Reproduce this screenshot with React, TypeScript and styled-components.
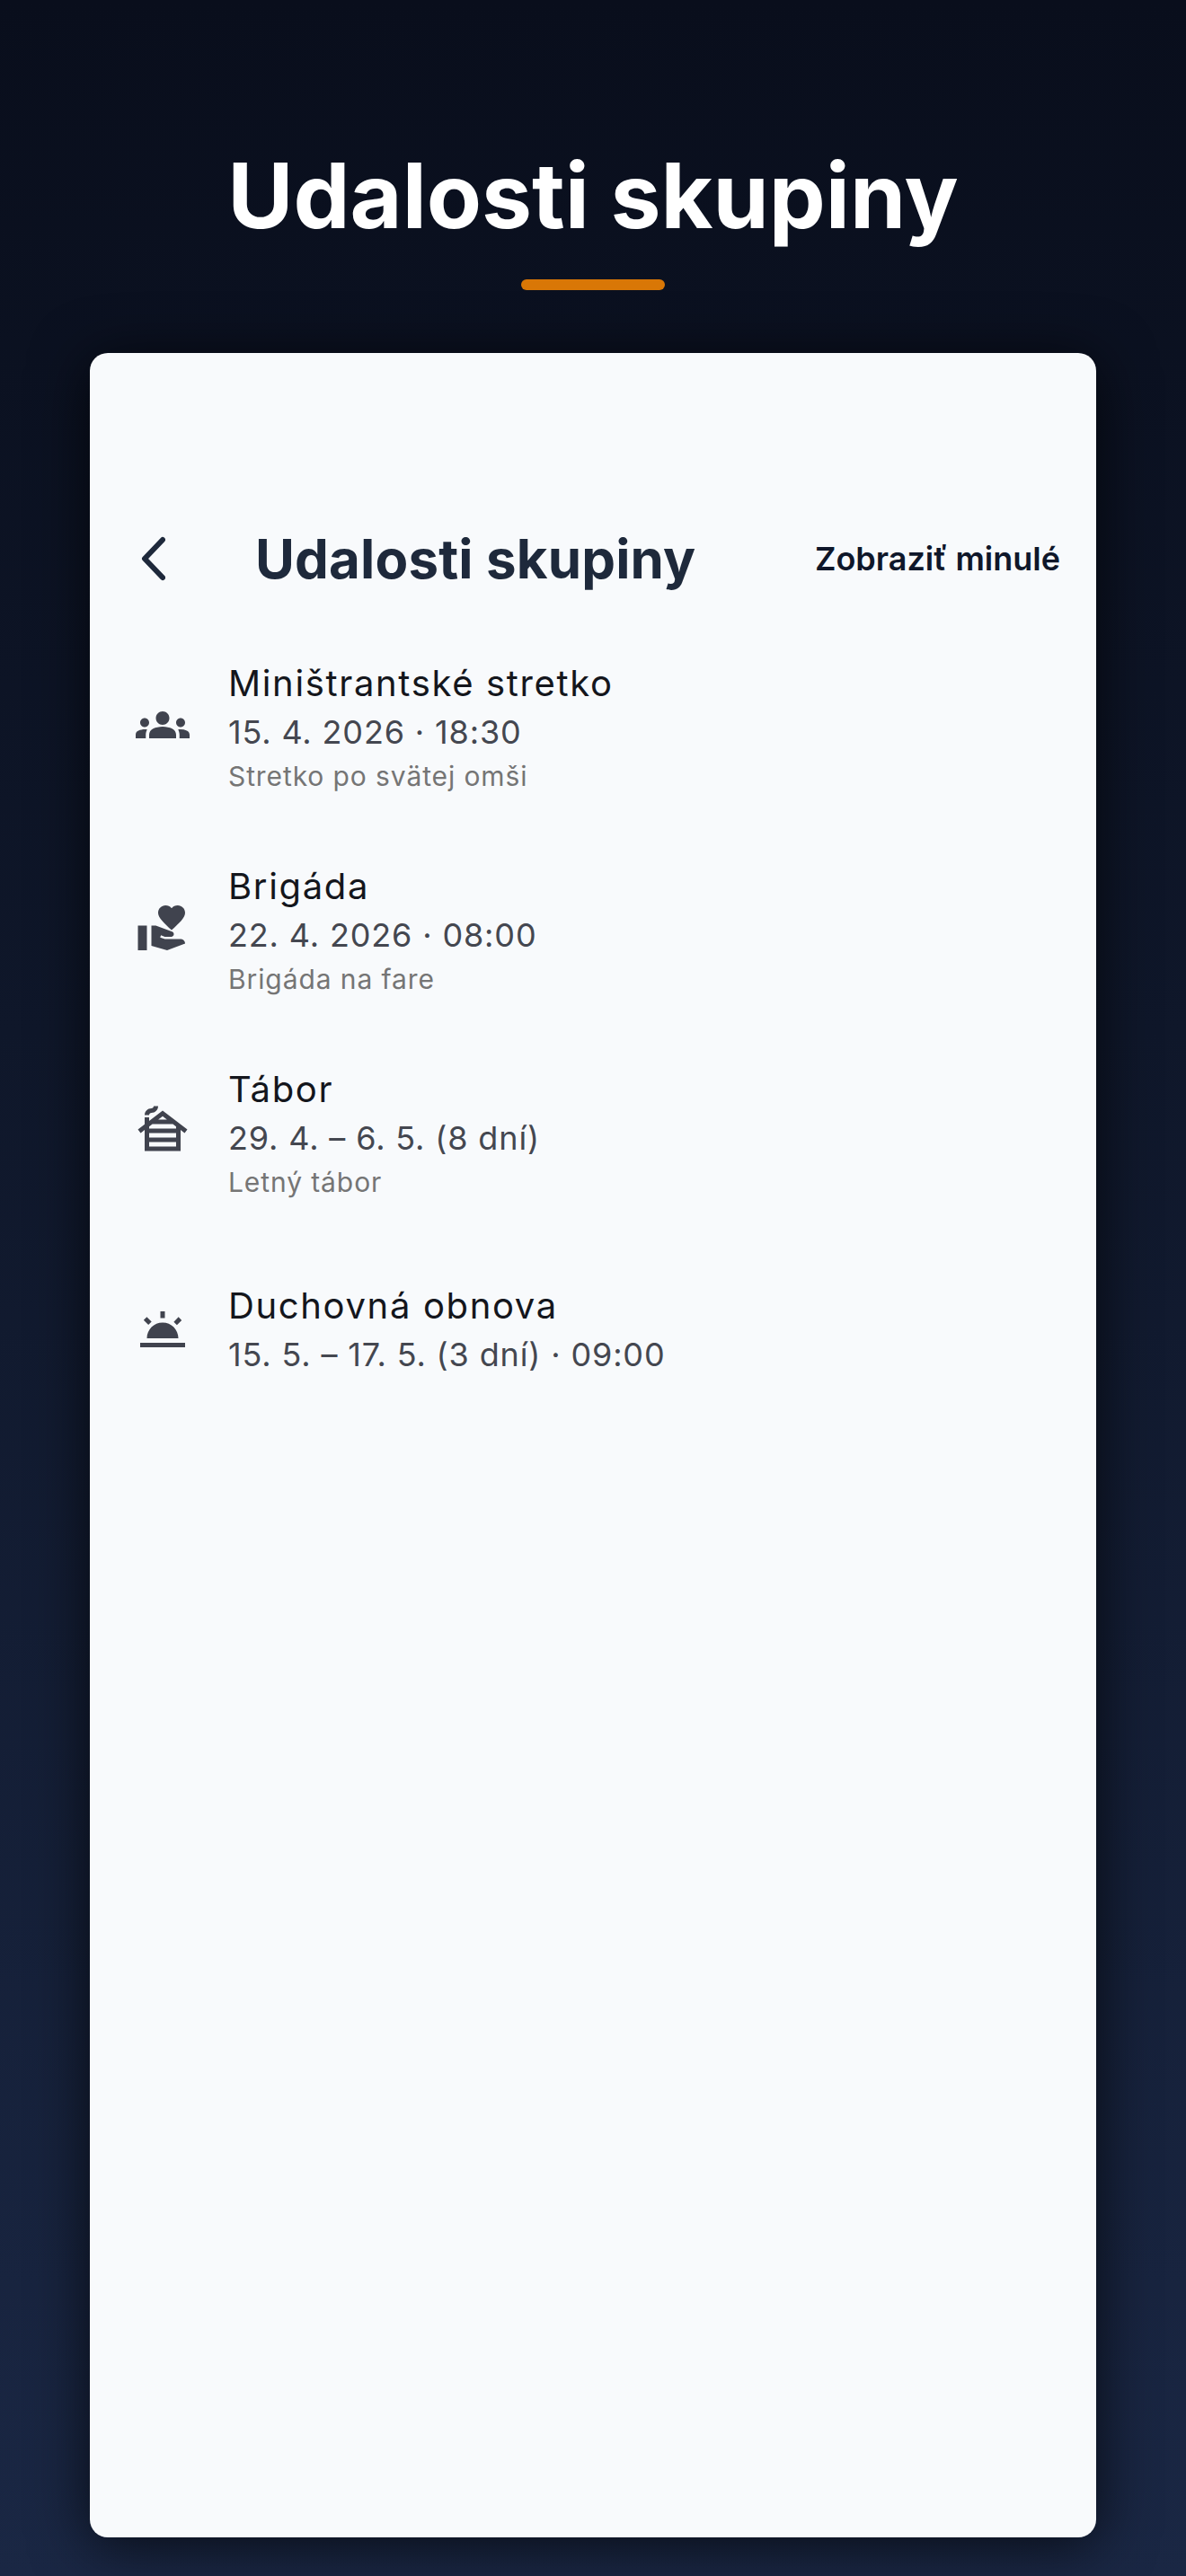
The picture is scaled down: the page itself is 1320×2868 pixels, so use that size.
import styled, { createGlobalStyle } from "styled-components";
import { MdCabin, MdGroups, MdVolunteerActivism, MdWbTwilight } from "react-icons/md";
import type { IconType } from "react-icons";

const GlobalStyle = createGlobalStyle`
  html, body {
    margin: 0;
    padding: 0;
  }
  body {
    font-family: Inter, "Noto Sans", sans-serif;
  }
`;

const Page = styled.div`
  width: 1320px;
  height: 2868px;
  box-sizing: border-box;
  padding: 0 100px 43px;
  display: flex;
  flex-direction: column;
  background: linear-gradient(180deg, #090e1c 0%, #0f172a 40%, #1a2744 100%);
`;

const PageHeader = styled.header`
  height: 393px;
  flex-shrink: 0;
  box-sizing: border-box;
  padding-top: 160px;
  display: flex;
  flex-direction: column;
  align-items: center;
`;

const PageTitle = styled.h1`
  margin: 0;
  height: 116px;
  font-size: 100px;
  line-height: 116px;
  font-weight: 700;
  color: #ffffff;
  white-space: nowrap;
`;

const Accent = styled.div`
  width: 160px;
  height: 12px;
  margin-top: 35px;
  border-radius: 6px;
  background: #d97706;
`;

const Card = styled.main`
  flex: 1;
  border-radius: 20px;
  background: #f8fafc;
  box-shadow: 0 8px 64px rgba(0, 0, 0, 0.7);
  padding-top: 194px;
`;

const Toolbar = styled.div`
  height: 70px;
  display: flex;
  align-items: center;
  padding: 0 40px;
`;

const BackButton = styled.button`
  width: 44px;
  height: 70px;
  margin-right: 100px;
  padding: 0;
  border: 0;
  background: none;
  display: flex;
  align-items: center;
  justify-content: center;
`;

const ToolbarTitle = styled.h2`
  margin: 0;
  flex: 1;
  font-size: 60px;
  letter-spacing: 0.15px;
  font-weight: 700;
  color: #1e293b;
  white-space: nowrap;
`;

const PastLink = styled.span`
  font-size: 36px;
  font-weight: 600;
  color: #0f172a;
  white-space: nowrap;
`;

const EventList = styled.ul`
  list-style: none;
  margin: 37px 0 0;
  padding: 0;
  display: flex;
  flex-direction: column;
`;

const EventRow = styled.li<{ $withNote: boolean }>`
  display: flex;
  align-items: center;
  padding: 0 40px 0 51px;
  height: ${(p) => (p.$withNote ? "226px" : "216px")};
`;

const IconSlot = styled.div`
  width: 103px;
  flex-shrink: 0;
  display: flex;
  align-items: center;
  color: #40434e;
`;

const EventText = styled.div<{ $withNote: boolean }>`
  display: flex;
  flex-direction: column;
  padding-top: ${(p) => (p.$withNote ? "6px" : "2px")};
`;

const EventName = styled.div`
  font-size: 40px;
  line-height: 54px;
  font-weight: 375;
  letter-spacing: 1.65px;
  color: #14161c;
`;

const EventDate = styled.div`
  font-size: 36px;
  line-height: 54px;
  font-weight: 375;
  letter-spacing: 0.85px;
  color: #444750;
`;

const EventNote = styled.div`
  font-size: 30px;
  line-height: 44px;
  font-weight: 375;
  letter-spacing: 0.9px;
  color: #757575;
`;

type EventItem = {
  icon: IconType;
  name: string;
  date: string;
  note?: string;
};

const events: EventItem[] = [
  { icon: MdGroups, name: "Miništrantské stretko", date: "15. 4. 2026 · 18:30", note: "Stretko po svätej omši" },
  { icon: MdVolunteerActivism, name: "Brigáda", date: "22. 4. 2026 · 08:00", note: "Brigáda na fare" },
  { icon: MdCabin, name: "Tábor", date: "29. 4. – 6. 5. (8 dní)", note: "Letný tábor" },
  { icon: MdWbTwilight, name: "Duchovná obnova", date: "15. 5. – 17. 5. (3 dní) · 09:00" },
];

const App = () => {
  return (
    <>
      <GlobalStyle />
      <Page>
        <PageHeader>
          <PageTitle>Udalosti skupiny</PageTitle>
          <Accent />
        </PageHeader>
        <Card>
          <Toolbar>
            <BackButton aria-label="Späť">
              <svg width="44" height="60" viewBox="0 0 44 60" fill="none">
                <path d="M41 9 L21 30 L41 51" stroke="#1e293b" strokeWidth="6" strokeLinecap="round" strokeLinejoin="round" />
              </svg>
            </BackButton>
            <ToolbarTitle>Udalosti skupiny</ToolbarTitle>
            <PastLink>Zobraziť minulé</PastLink>
          </Toolbar>
          <EventList>
            {events.map((item) => (
              <EventRow key={item.name} $withNote={!!item.note}>
                <IconSlot>
                  <item.icon size={60} />
                </IconSlot>
                <EventText $withNote={!!item.note}>
                  <EventName>{item.name}</EventName>
                  <EventDate>{item.date}</EventDate>
                  {item.note && <EventNote>{item.note}</EventNote>}
                </EventText>
              </EventRow>
            ))}
          </EventList>
        </Card>
      </Page>
    </>
  );
};

export default App;
